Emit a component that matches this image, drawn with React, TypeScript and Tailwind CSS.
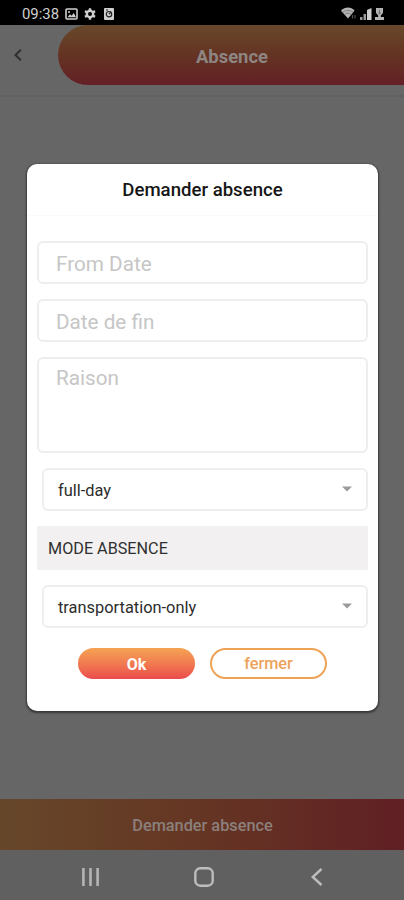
import type { ReactNode } from "react";

const Field = ({ label }: { label: string }) => (
  <div className="flex h-[43px] items-center rounded-[6px] border-2 border-[#eeeeee] pt-[2px] pl-[17px]">
    <span className="text-[20.7px] leading-6 text-[#c6c6c6]">{label}</span>
  </div>
);

const Select = ({ value }: { value: string }) => (
  <div className="ml-[5px] flex h-[43px] items-center justify-between rounded-[6px] border-2 border-[#eeeeee] pt-[3px] pr-[14px] pl-[14px]">
    <span className="text-[16.4px] leading-5 text-[#2d2d2d]">{value}</span>
    <svg width="10" height="6" viewBox="0 0 10 6" className="-mt-[4px]">
      <path d="M0 0.5H10L5 5.5Z" fill="#9b9b9b" />
    </svg>
  </div>
);

const StatusBar = () => (
  <div className="flex h-[25px] shrink-0 items-center bg-black pt-[2px] pr-[20px] pl-[22px] text-[#cfcfcf]">
    <span className="w-[38px] text-[14.9px] leading-4 whitespace-nowrap">09:38</span>
    <svg width="13" height="12" viewBox="0 0 13 12" className="ml-[5px]">
      <rect x="1" y="1" width="11" height="10" rx="1" fill="none" stroke="currentColor" strokeWidth="1.6" />
      <path d="M2.5 9.2L5 6.2L6.7 7.8L8.8 5L11 9.2Z" fill="currentColor" />
      <circle cx="4" cy="4" r="1" fill="currentColor" />
    </svg>
    <svg width="12" height="12" viewBox="0 0 12 12" className="ml-[6px]">
      <circle cx="6" cy="6" r="3.2" fill="none" stroke="currentColor" strokeWidth="2.4" />
      <path
        d="M6 0.3V2.5M6 9.5V11.7M1 3.1L2.9 4.2M9.1 7.8L11 8.9M1 8.9L2.9 7.8M9.1 4.2L11 3.1"
        stroke="currentColor"
        strokeWidth="2.4"
      />
    </svg>
    <svg width="10" height="12" viewBox="0 0 10 12" className="ml-2">
      <rect width="10" height="12" rx="1" fill="currentColor" />
      <circle cx="5" cy="6.2" r="2.7" fill="none" stroke="#222" strokeWidth="1.2" />
      <path d="M5 6.2L7 3.8M2 2H4" stroke="#222" strokeWidth="1.2" />
    </svg>
    <svg width="16" height="13" viewBox="0 0 16 13" className="ml-auto">
      <path d="M0 3.8C4 -0.5 10 -0.5 13.5 3.8L7 11.5Z" fill="#b5b5b5" />
      <path d="M2 5.2C5 2.8 9 2.8 12 5.2M4 7.2C6 5.8 8 5.8 10 7.2" fill="none" stroke="#555" strokeWidth="0.6" />
      <path d="M11.5 8V11.5M14 8V11.5" stroke="#555" strokeWidth="1.1" />
    </svg>
    <svg width="12" height="12" viewBox="0 0 12 12" className="ml-[3px]">
      <path d="M0 9H2.5V12H0ZM3.5 6H6V12H3.5Z" fill="#999" />
      <path d="M7 2L11.5 0V12H7Z" fill="currentColor" />
    </svg>
    <svg width="9" height="12" viewBox="0 0 9 12" className="ml-[3px]">
      <path d="M1 0H8V5L5.8 7.5V9H9V12H0V9H3.2V7.5L1 5Z" fill="#b5b5b5" />
      <path d="M4.5 1.5V6M2.7 4.3L4.5 6L6.3 4.3" fill="none" stroke="#666" strokeWidth="0.8" />
    </svg>
  </div>
);

const NavBar = () => (
  <div className="flex h-[50px] shrink-0 items-center bg-[#606060] pt-[3px] pl-[81px]">
    <svg width="19" height="20" viewBox="0 0 19 20" stroke="#b4b4b4" strokeWidth="2.6">
      <path d="M2.4 1V19M9.5 1V19M16.6 1V19" />
    </svg>
    <svg width="20" height="20" viewBox="0 0 20 20" className="ml-[94px]">
      <rect x="1.3" y="1.3" width="17.4" height="17.4" rx="5" fill="none" stroke="#bdbdbd" strokeWidth="2.4" />
    </svg>
    <svg width="12" height="20" viewBox="0 0 12 20" className="ml-[97px]">
      <path d="M10.5 2L1.7 10L10.5 18" fill="none" stroke="#bdbdbd" strokeWidth="2.4" />
    </svg>
  </div>
);

const Dialog = ({ title, children }: { title: string; children: ReactNode }) => (
  <div className="absolute top-[164px] left-[27px] flex h-[547px] w-[351px] flex-col rounded-[10px] bg-white shadow-[0_1px_2px_1px_rgba(0,0,0,0.45)]">
    <h2 className="flex h-[52px] items-center justify-center border-b border-[#fafafa] pt-[3px] text-[18.6px] font-medium text-[#161616]">
      {title}
    </h2>
    {children}
  </div>
);

const App = () => {
  return (
    <div className="relative flex h-[900px] w-[404px] flex-col overflow-hidden bg-[#666666] font-['Roboto',sans-serif]">
      <StatusBar />
      <header className="flex h-[72px] shrink-0 items-start border-b-2 border-[#5f6263]">
        <svg width="8" height="12" viewBox="0 0 8 12" className="mt-[24px] ml-[14px]">
          <path d="M6.8 0.8L1.5 6L6.8 11.2" fill="none" stroke="#2e2e2e" strokeWidth="2" />
        </svg>
        <div className="ml-[36px] flex h-[60px] flex-1 items-center rounded-l-full bg-linear-to-b from-[#67482a] via-[#643323] to-[#641f26] pl-[138px]">
          <h1 className="pt-[4px] text-[18.4px] font-bold text-[#8d8582]">Absence</h1>
        </div>
      </header>
      <main className="flex-1" />
      <div className="flex h-[51px] shrink-0 items-center justify-center bg-linear-to-r from-[#66472a] via-[#653523] to-[#601f24] pt-[3px] pl-px">
        <span className="text-[16.3px] font-medium text-[#8b807c]">Demander absence</span>
      </div>
      <NavBar />

      <Dialog title="Demander absence">
        <div className="flex flex-col gap-[15px] pt-[25px] pr-[10px] pl-[10px]">
          <Field label="From Date" />
          <Field label="Date de fin" />
          <div className="h-[96px] rounded-[6px] border-2 border-[#eeeeee] pt-[7px] pl-[17px]">
            <span className="block text-[20.7px] leading-6 text-[#c6c6c6]">Raison</span>
          </div>
          <Select value="full-day" />
          <div className="flex h-[44px] items-center bg-[#f2f0f1] pt-[3px] pl-[11px] text-[16.2px] text-[#303030]">
            MODE ABSENCE
          </div>
          <Select value="transportation-only" />
        </div>
        <div className="mt-[20px] flex justify-center gap-[15px]">
          <button className="h-[31px] w-[117px] rounded-full bg-linear-to-b from-[#f4a353] to-[#ea4a4c] pt-[2px] text-[16px] font-bold text-white">
            Ok
          </button>
          <button className="h-[31px] w-[117px] rounded-full border-2 border-[#eda356] pt-[2px] text-[16.3px] font-medium text-[#eda35c]">
            fermer
          </button>
        </div>
      </Dialog>
    </div>
  );
};

export default App;
